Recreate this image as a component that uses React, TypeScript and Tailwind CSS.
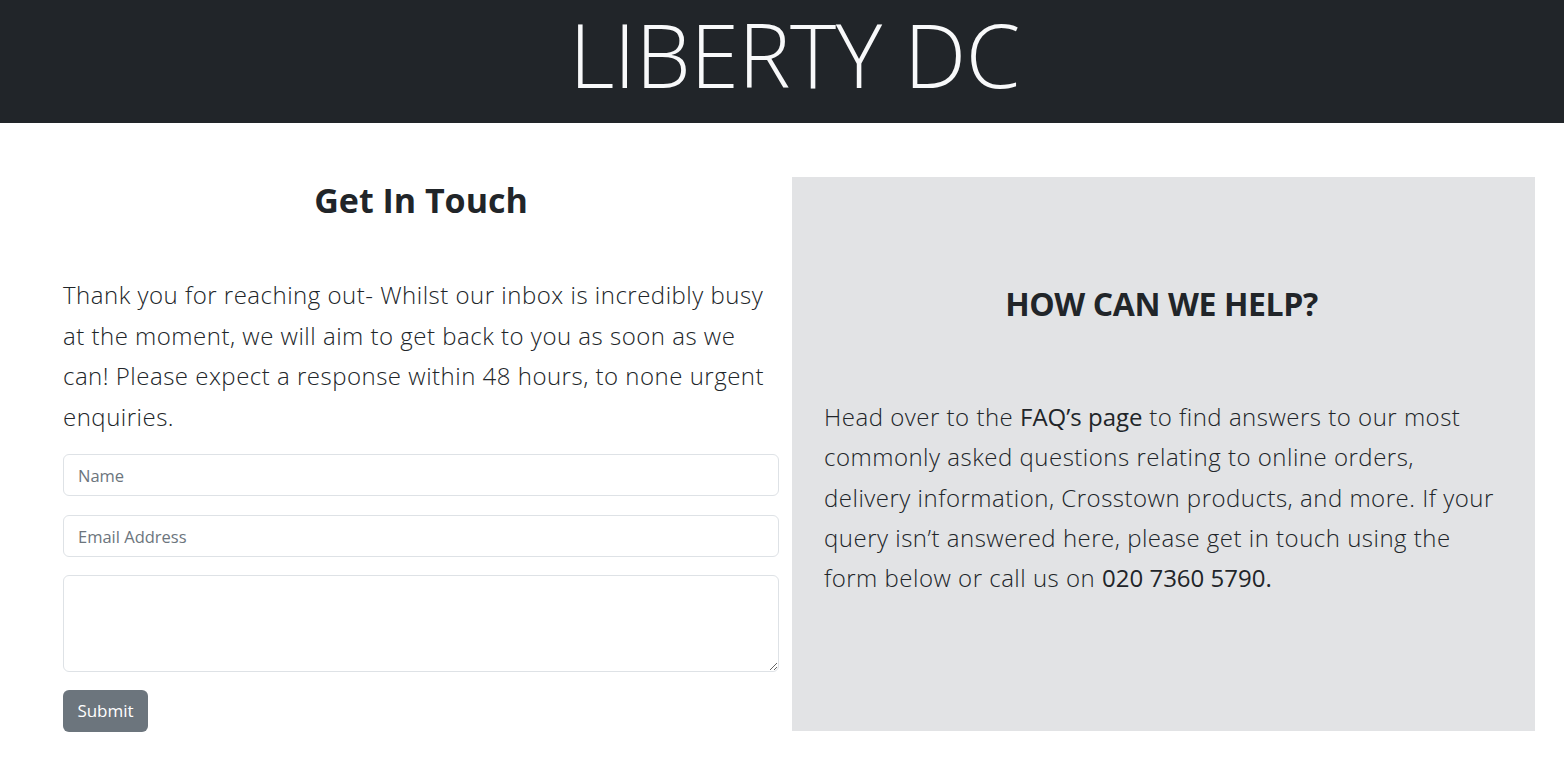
import type { FC } from 'react';

const App: FC = () => {
  return (
    <div className="min-h-screen bg-white text-[#212529] font-['Open_Sans',sans-serif]">
      <header className="bg-[#212529] h-[123px] flex justify-center pt-[10px] pl-[25px]">
        <h1 className="text-[#f8f9fa] text-[88px] font-light leading-[88px] tracking-[-0.5px]">
          LIBERTY DC
        </h1>
      </header>

      <main className="flex items-start gap-[13px] pl-[63px] pr-[29px] pt-[53px]">
        <section className="w-[716px] shrink-0">
          <h2 className="text-center text-[34px] font-bold leading-[48px]">Get In Touch</h2>

          <p className="mt-[51px] text-[24px] font-light leading-[40.5px] tracking-[0.5px]">
            Thank you for reaching out- Whilst our inbox is incredibly busy at the moment, we will aim to
            get back to you as soon as we can! Please expect a response within 48 hours, to none urgent
            enquiries.
          </p>

          <form className="mt-[17px] flex flex-col">
            <input
              type="text"
              placeholder="Name"
              className="h-[42px] w-full rounded-[6px] border border-[#dee2e6] px-[14px] text-[16.5px] placeholder:text-[#6c757d] outline-none"
            />
            <input
              type="email"
              placeholder="Email Address"
              className="mt-[19px] h-[42px] w-full rounded-[6px] border border-[#dee2e6] px-[14px] text-[16.5px] placeholder:text-[#6c757d] outline-none"
            />
            <textarea className="mt-[18px] h-[97px] w-full rounded-[6px] border border-[#dee2e6] px-[14px] py-[6px] text-[16.5px] outline-none" />
            <div className="mt-[18px]">
              <button
                type="button"
                className="h-[42px] w-[85px] rounded-[6px] bg-[#6c757d] text-[17px] text-white"
              >
                Submit
              </button>
            </div>
          </form>
        </section>

        <section className="mt-[1px] w-[743px] h-[554px] bg-[#e2e3e5] pl-[32px] pr-[36px] pt-[105px]">
          <h2 className="text-center text-[32px] font-bold leading-[44px] tracking-[-0.4px]">HOW CAN WE HELP?</h2>
          <p className="mt-[71px] text-[24px] font-light leading-[40.3px] tracking-[0.5px]">
            Head over to the <span className="font-normal tracking-normal">FAQ’s page</span> to find answers to our most
            commonly asked questions relating to online orders, delivery information, Crosstown products,
            and more. If your query isn’t answered here, please get in touch using the form below or call
            us on <span className="font-normal tracking-normal">020 7360 5790.</span>
          </p>
        </section>
      </main>
    </div>
  );
};

export default App;
